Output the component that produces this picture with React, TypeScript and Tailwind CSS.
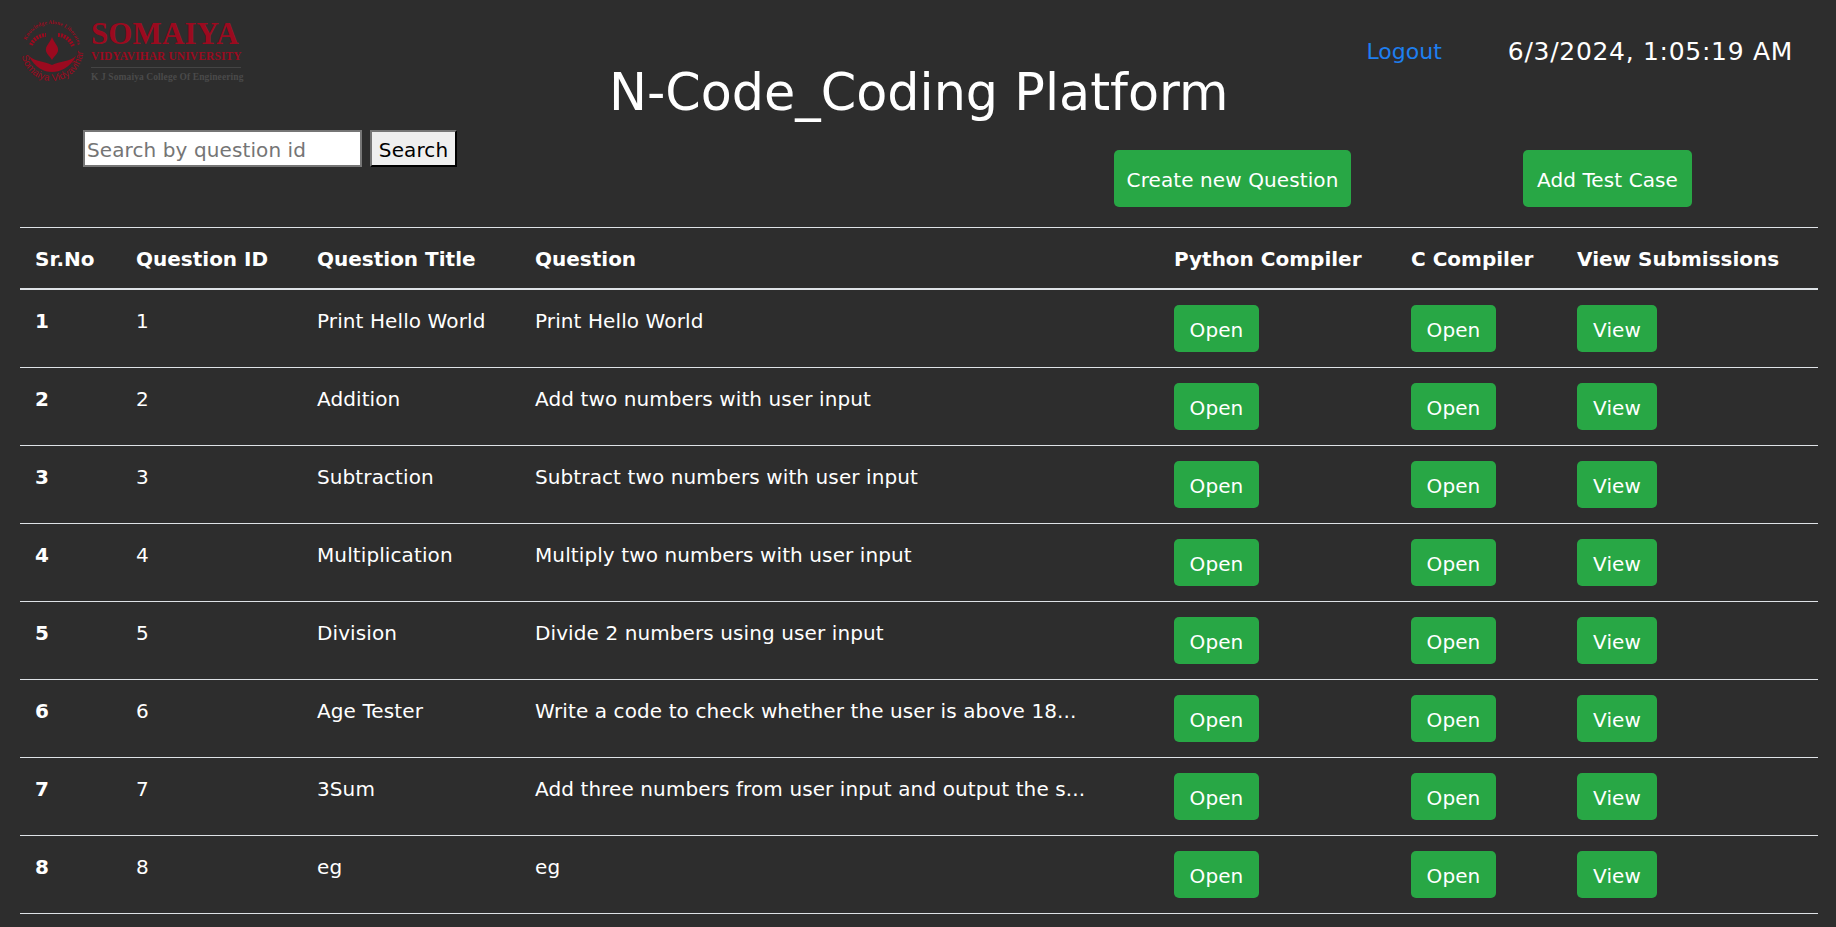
const questions = [
  { id: 1, title: "Print Hello World", text: "Print Hello World" },
  { id: 2, title: "Addition", text: "Add two numbers with user input" },
  { id: 3, title: "Subtraction", text: "Subtract two numbers with user input" },
  { id: 4, title: "Multiplication", text: "Multiply two numbers with user input" },
  { id: 5, title: "Division", text: "Divide 2 numbers using user input" },
  { id: 6, title: "Age Tester", text: "Write a code to check whether the user is above 18..." },
  { id: 7, title: "3Sum", text: "Add three numbers from user input and output the s..." },
  { id: 8, title: "eg", text: "eg" },
];

function Emblem() {
  return (
    <svg width="66" height="66" viewBox="0 0 66 66" className="shrink-0">
      <defs>
        <path id="topArc" d="M4 31 A27 27 0 0 1 58 31" />
        <path id="bottomArc" d="M1 30 A31 31 0 0 0 63 30" />
      </defs>
      <text fill="#9b0a1f" fontSize="5.5" fontWeight="700" fontFamily="Liberation Serif, serif">
        <textPath href="#topArc" startOffset="11">Knowledge Alone Liberates</textPath>
      </text>
      <text fill="#9b0a1f" fontSize="10" fontFamily="Liberation Sans, sans-serif">
        <textPath href="#bottomArc" startOffset="6">Somaiya Vidyavihar</textPath>
      </text>
      <path d="M9 36 C15 48 24 52 32 52 C40 52 50 48 56 36 C49 42 40 41 32 45 C24 41 16 42 9 36 Z" fill="#9b0a1f" />
      <path d="M32 17 C34 23 39 26 38 31 C37 35 34 36 32 40 C30 36 27 35 26 31 C25 26 30 23 32 17 Z" fill="#9b0a1f" />
      <path d="M11 25 C14 18 21 15 26 15 M38 15 C44 15 50 19 53 26" fill="none" stroke="#9b0a1f" strokeWidth="4" strokeDasharray="2 1" />
    </svg>
  );
}

function Logo() {
  return (
    <div className="flex w-[226px] items-start gap-[5px] pt-[2px]">
      <Emblem />
      <div className="flex w-[150px] flex-col" style={{ fontFamily: "'Liberation Serif', serif" }}>
        <span className="text-[31px] leading-[28px] font-bold text-[#9b0a1f] whitespace-nowrap">SOMAIYA</span>
        <span className="mt-[1px] text-[11.5px] leading-[14px] font-bold text-[#9b0a1f] whitespace-nowrap">VIDYAVIHAR UNIVERSITY</span>
        <span className="mt-[4px] border-t border-[#444444] pt-[3px] text-[9.5px] leading-[12px] font-bold tracking-[0.1px] text-[#4a4a4a] whitespace-nowrap">K J Somaiya College Of Engineering</span>
      </div>
    </div>
  );
}

function GreenButton({ label, className }: { label: string; className: string }) {
  return (
    <button className={`rounded-[5px] bg-[#28a745] pt-[2px] text-[20px] leading-[30px] text-white ${className}`}>
      {label}
    </button>
  );
}

export default function App() {
  return (
    <div
      className="min-h-[927px] overflow-hidden bg-[#2d2d2d] pr-[18px] pl-5 text-[20px] leading-[30px] tracking-[0.1px] text-white"
      style={{ fontFamily: "'DejaVu Sans', sans-serif" }}
    >
      <div className="flex h-[130px] items-start pt-[18px]">
        <Logo />
        <h1 className="mt-[45px] ml-[363px] text-[50.8px] leading-[60px] tracking-normal whitespace-nowrap">N-Code_Coding Platform</h1>
        <a className="mt-[19px] ml-[138px] text-[22px] tracking-normal text-[#1e7ff0]">Logout</a>
        <span className="mt-[19px] ml-[66px] text-[25px] tracking-[0.7px] whitespace-nowrap">6/3/2024, 1:05:19 AM</span>
      </div>

      <div className="flex h-[97px] items-start">
        <div className="ml-[63px] flex gap-2">
          <input
            placeholder="Search by question id"
            className="h-[37px] w-[279px] border-2 border-[#767676] bg-white px-[2px] pt-[2px] text-[20px] text-black placeholder:text-[#757575]"
          />
          <button className="h-[37px] w-[87px] border-2 border-t-[#767676] border-r-black border-b-black border-l-[#767676] bg-[#efefef] pt-[2px] text-[20px] text-black">
            Search
          </button>
        </div>
        <GreenButton label="Create new Question" className="mt-[20px] ml-[657px] h-[57px] w-[237px]" />
        <GreenButton label="Add Test Case" className="mt-[20px] ml-[172px] h-[57px] w-[169px]" />
      </div>

      <table className="w-full table-fixed border-t border-[#dee2e6] text-left">
        <colgroup>
          <col className="w-[101px]" />
          <col className="w-[181px]" />
          <col className="w-[218px]" />
          <col className="w-[639px]" />
          <col className="w-[237px]" />
          <col className="w-[166px]" />
          <col />
        </colgroup>
        <thead>
          <tr className="border-b-2 border-[#dee2e6] font-bold tracking-normal">
            <th className="px-[15px] pt-[16px] pb-[14px]">Sr.No</th>
            <th className="px-[15px] pt-[16px] pb-[14px]">Question ID</th>
            <th className="px-[15px] pt-[16px] pb-[14px]">Question Title</th>
            <th className="px-[15px] pt-[16px] pb-[14px]">Question</th>
            <th className="px-[15px] pt-[16px] pb-[14px]">Python Compiler</th>
            <th className="px-[15px] pt-[16px] pb-[14px]">C Compiler</th>
            <th className="px-[15px] pt-[16px] pb-[14px]">View Submissions</th>
          </tr>
        </thead>
        <tbody>
          {questions.map((q) => (
            <tr key={q.id} className="border-b border-[#dee2e6]">
              <td className="px-[15px] pt-[16px] align-top font-bold">{q.id}</td>
              <td className="px-[15px] pt-[16px] align-top">{q.id}</td>
              <td className="px-[15px] pt-[16px] align-top">{q.title}</td>
              <td className="px-[15px] pt-[16px] align-top whitespace-nowrap">{q.text}</td>
              <td className="p-[15px] align-top">
                <GreenButton label="Open" className="block h-[47px] w-[85px]" />
              </td>
              <td className="p-[15px] align-top">
                <GreenButton label="Open" className="block h-[47px] w-[85px]" />
              </td>
              <td className="p-[15px] align-top">
                <GreenButton label="View" className="block h-[47px] w-[80px]" />
              </td>
            </tr>
          ))}
        </tbody>
      </table>
    </div>
  );
}
